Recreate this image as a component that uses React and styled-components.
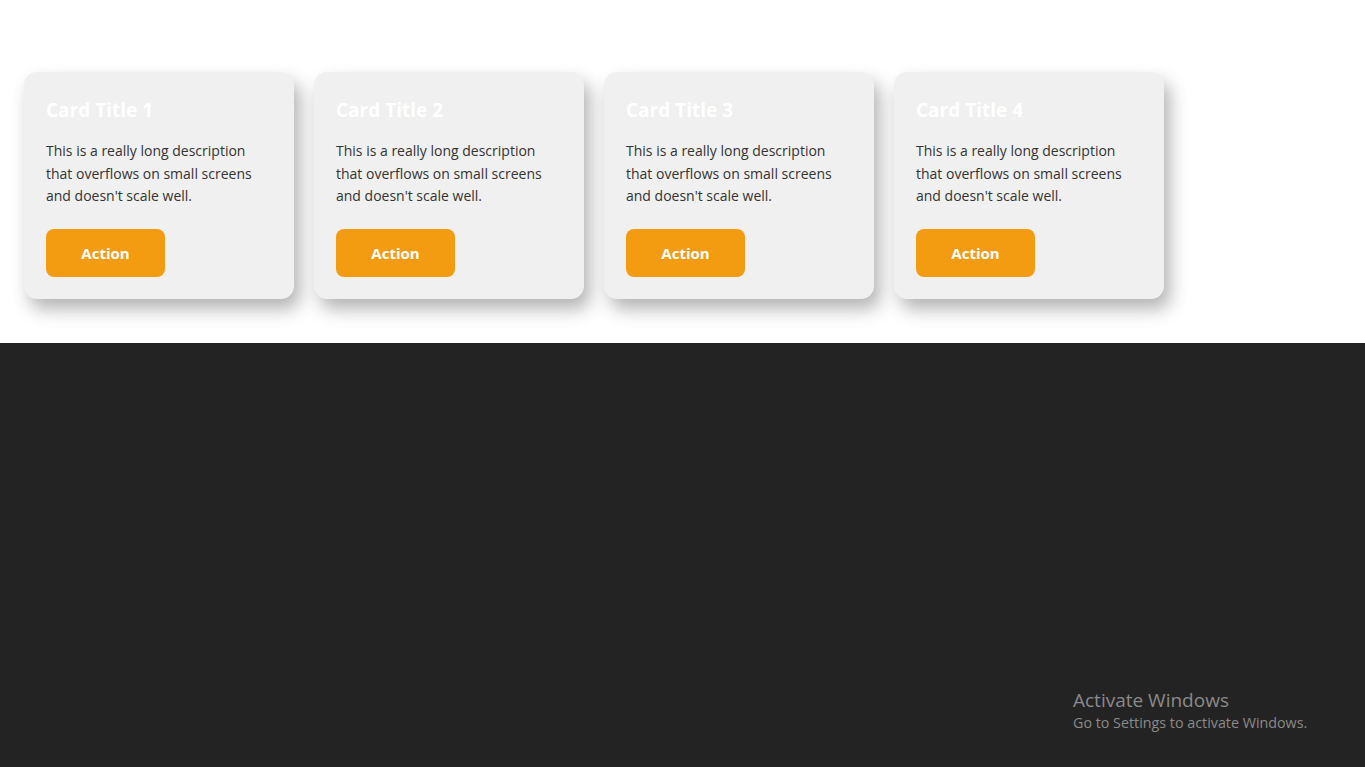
import React from "react";
import styled, { createGlobalStyle } from "styled-components";

const Global = createGlobalStyle`
  html, body { margin: 0; padding: 0; }
  body {
    background: #232323;
    font-family: "Open Sans", "Noto Sans", sans-serif;
  }
`;

const Page = styled.div`
  min-height: 767px;
  display: flex;
  flex-direction: column;
  background: #232323;
  position: relative;
`;

const CardSection = styled.section`
  background: #ffffff;
  display: flex;
  gap: 20px;
  padding: 72px 24px 44px;
`;

const Card = styled.article`
  width: 270px;
  box-sizing: border-box;
  padding: 24px 22px 22px;
  background: #f0f0f0;
  border-radius: 13px;
  box-shadow: 6px 10px 18px rgba(0, 0, 0, 0.3);
  display: flex;
  flex-direction: column;
  align-items: flex-start;
`;

const Title = styled.h2`
  margin: 0 0 16px;
  font-size: 19px;
  line-height: 28px;
  font-weight: 700;
  color: #ffffff;
`;

const Description = styled.p`
  margin: 0 0 21px;
  font-size: 14px;
  line-height: 22.5px;
  color: #333333;
`;

const ActionButton = styled.button`
  height: 48px;
  width: 119px;
  border: none;
  border-radius: 8px;
  background: #f39c12;
  color: #ffffff;
  font-family: "Open Sans", "Noto Sans", sans-serif;
  font-size: 15px;
  font-weight: 700;
  cursor: pointer;
`;

const Watermark = styled.div`
  position: absolute;
  left: 1073px;
  top: 687px;
  color: #8a8a8a;
  font-family: "Open Sans", "Noto Sans", sans-serif;
`;

const WatermarkTitle = styled.div`
  font-size: 19px;
  line-height: 26px;
`;

const WatermarkText = styled.div`
  font-size: 14.3px;
  line-height: 20px;
`;

const cards = [1, 2, 3, 4];

export default function App() {
  return (
    <Page>
      <Global />
      <CardSection>
        {cards.map((n) => (
          <Card key={n}>
            <Title>Card Title {n}</Title>
            <Description>
              This is a really long description that overflows on small screens
              and doesn't scale well.
            </Description>
            <ActionButton>Action</ActionButton>
          </Card>
        ))}
      </CardSection>
      <Watermark>
        <WatermarkTitle>Activate Windows</WatermarkTitle>
        <WatermarkText>Go to Settings to activate Windows.</WatermarkText>
      </Watermark>
    </Page>
  );
}
